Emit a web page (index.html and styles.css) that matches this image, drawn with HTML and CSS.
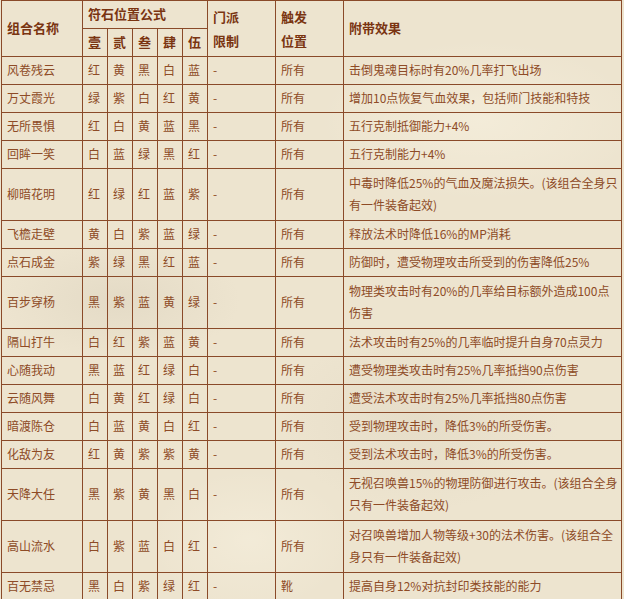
FILE: index.html
```html
<!DOCTYPE html>
<html lang="zh-CN">
<head>
<meta charset="utf-8">
<title>符石组合</title>
<link rel="stylesheet" href="styles.css">
</head>
<body>
<table class="combo">
  <colgroup>
    <col class="c-name">
    <col class="c-stone"><col class="c-stone"><col class="c-stone"><col class="c-stone"><col class="c-stone">
    <col class="c-sect">
    <col class="c-pos">
    <col class="c-effect">
  </colgroup>
  <thead>
    <tr>
      <th rowspan="2" class="mid">组合名称</th>
      <th colspan="5">符石位置公式</th>
      <th rowspan="2" class="stack">门派<br>限制</th>
      <th rowspan="2" class="stack">触发<br>位置</th>
      <th rowspan="2" class="mid">附带效果</th>
    </tr>
    <tr>
      <th>壹</th><th>贰</th><th>叁</th><th>肆</th><th>伍</th>
    </tr>
  </thead>
  <tbody>
    <tr><td>风卷残云</td><td>红</td><td>黄</td><td>黑</td><td>白</td><td>蓝</td><td>-</td><td>所有</td><td>击倒鬼魂目标时有20%几率打飞出场</td></tr>
    <tr><td>万丈霞光</td><td>绿</td><td>紫</td><td>白</td><td>红</td><td>黄</td><td>-</td><td>所有</td><td>增加10点恢复气血效果，包括师门技能和特技</td></tr>
    <tr><td>无所畏惧</td><td>红</td><td>白</td><td>黄</td><td>蓝</td><td>黑</td><td>-</td><td>所有</td><td>五行克制抵御能力+4%</td></tr>
    <tr><td>回眸一笑</td><td>白</td><td>蓝</td><td>绿</td><td>黑</td><td>红</td><td>-</td><td>所有</td><td>五行克制能力+4%</td></tr>
    <tr class="two"><td>柳暗花明</td><td>红</td><td>绿</td><td>红</td><td>蓝</td><td>紫</td><td>-</td><td>所有</td><td>中毒时降低25%的气血及魔法损失。(该组合全身只有一件装备起效)</td></tr>
    <tr><td>飞檐走壁</td><td>黄</td><td>白</td><td>紫</td><td>蓝</td><td>绿</td><td>-</td><td>所有</td><td>释放法术时降低16%的MP消耗</td></tr>
    <tr><td>点石成金</td><td>紫</td><td>绿</td><td>黑</td><td>红</td><td>蓝</td><td>-</td><td>所有</td><td>防御时，遭受物理攻击所受到的伤害降低25%</td></tr>
    <tr class="two"><td>百步穿杨</td><td>黑</td><td>紫</td><td>蓝</td><td>黄</td><td>绿</td><td>-</td><td>所有</td><td>物理类攻击时有20%的几率给目标额外造成100点伤害</td></tr>
    <tr><td>隔山打牛</td><td>白</td><td>红</td><td>紫</td><td>蓝</td><td>黄</td><td>-</td><td>所有</td><td>法术攻击时有25%的几率临时提升自身70点灵力</td></tr>
    <tr><td>心随我动</td><td>黑</td><td>蓝</td><td>红</td><td>绿</td><td>白</td><td>-</td><td>所有</td><td>遭受物理类攻击时有25%几率抵挡90点伤害</td></tr>
    <tr><td>云随风舞</td><td>白</td><td>黄</td><td>红</td><td>绿</td><td>白</td><td>-</td><td>所有</td><td>遭受法术攻击时有25%几率抵挡80点伤害</td></tr>
    <tr><td>暗渡陈仓</td><td>白</td><td>蓝</td><td>黄</td><td>白</td><td>红</td><td>-</td><td>所有</td><td>受到物理攻击时，降低3%的所受伤害。</td></tr>
    <tr><td>化敌为友</td><td>红</td><td>黄</td><td>紫</td><td>紫</td><td>黄</td><td>-</td><td>所有</td><td>受到法术攻击时，降低3%的所受伤害。</td></tr>
    <tr class="two"><td>天降大任</td><td>黑</td><td>紫</td><td>黄</td><td>黑</td><td>白</td><td>-</td><td>所有</td><td>无视召唤兽15%的物理防御进行攻击。(该组合全身只有一件装备起效)</td></tr>
    <tr class="two"><td>高山流水</td><td>白</td><td>紫</td><td>蓝</td><td>白</td><td>红</td><td>-</td><td>所有</td><td>对召唤兽增加人物等级+30的法术伤害。(该组合全身只有一件装备起效)</td></tr>
    <tr><td>百无禁忌</td><td>黑</td><td>白</td><td>紫</td><td>绿</td><td>红</td><td>-</td><td>靴</td><td>提高自身12%对抗封印类技能的能力</td></tr>
    <tr class="cut"><td>&nbsp;</td><td></td><td></td><td></td><td></td><td></td><td></td><td></td><td></td></tr>
  </tbody>
</table>
</body>
</html>
```

FILE: styles.css
```css
html, body {
  margin: 0;
  padding: 0;
}

body {
  background-color: #ede4cf;
  background-image:
    radial-gradient(ellipse 120px 60px at 120px 300px, rgba(200, 190, 170, 0.25), transparent),
    radial-gradient(ellipse 160px 80px at 480px 120px, rgba(255, 250, 235, 0.35), transparent),
    radial-gradient(ellipse 140px 90px at 420px 420px, rgba(205, 195, 175, 0.22), transparent),
    radial-gradient(ellipse 100px 70px at 250px 540px, rgba(255, 250, 235, 0.3), transparent);
  font-family: "Noto Sans CJK SC", "Noto Sans", sans-serif;
  color: #8e4b26;
  overflow: hidden;
}

.combo {
  border-collapse: collapse;
  table-layout: fixed;
  width: 621px;
  margin: 0 0 0 1px;
  border: 1px solid #8a4a29;
}

.c-name { width: 81px; }
.c-stone { width: 25px; }
.c-sect { width: 68px; }
.c-pos { width: 68px; }
.c-effect { width: 278px; }

.combo th,
.combo td {
  border: 1px solid #8a4a29;
  padding: 2px 0 3px 5px;
  text-align: left;
  vertical-align: middle;
}

.combo th {
  font-size: 13px;
  font-weight: bold;
  line-height: 22px;
  color: #7a3411;
}

.combo th.stack {
  vertical-align: top;
  padding-top: 4px;
  line-height: 24px;
}

.combo td {
  font-size: 12px;
  line-height: 22px;
}

.combo tr.two td {
  padding-top: 3px;
  padding-bottom: 4px;
}

.combo tr.cut td {
  height: 22px;
}
```
